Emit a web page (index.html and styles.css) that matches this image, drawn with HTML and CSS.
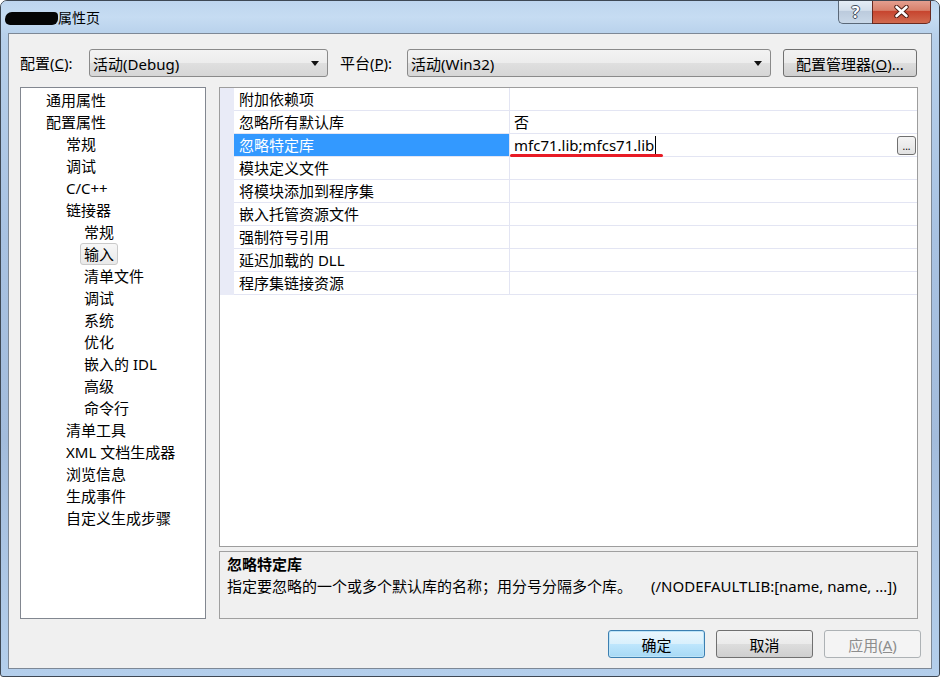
FILE: index.html
```html
<!DOCTYPE html>
<html lang="zh-CN">
<head>
    <meta charset="UTF-8">
    <title>属性页</title>
    <link rel="stylesheet" href="styles.css">
</head>
<body>
    <div class="window">
        <div class="titlebar">
            <div class="title"><span class="redact"></span>属性页</div>
            <div class="caption-buttons">
                <div class="cap-help">?</div>
                <div class="cap-close">
                    <svg width="15" height="13" viewBox="0 0 15 13">
                        <path d="M2.5 2 L12.5 11 M12.5 2 L2.5 11" stroke="#4b1d14" stroke-width="4.4" stroke-linecap="round"/>
                        <path d="M2.5 2 L12.5 11 M12.5 2 L2.5 11" stroke="#fff" stroke-width="2.6" stroke-linecap="round"/>
                    </svg>
                </div>
            </div>
        </div>

        <div class="client">
            <div class="toolbar">
                <label class="field-label label-config">配置(<u>C</u>):</label>
                <div class="combo combo-config"><span>活动(Debug)</span><i class="arrow"></i></div>
                <label class="field-label label-platform">平台(<u>P</u>):</label>
                <div class="combo combo-platform"><span>活动(Win32)</span><i class="arrow"></i></div>
                <button class="win-button config-manager">配置管理器(<u>O</u>)...</button>
            </div>

            <div class="main">
                <div class="tree">
                    <div class="tree-item level-0"><span>通用属性</span></div>
                    <div class="tree-item level-0"><span>配置属性</span></div>
                    <div class="tree-item level-1"><span>常规</span></div>
                    <div class="tree-item level-1"><span>调试</span></div>
                    <div class="tree-item level-1"><span>C/C++</span></div>
                    <div class="tree-item level-1"><span>链接器</span></div>
                    <div class="tree-item level-2"><span>常规</span></div>
                    <div class="tree-item level-2 selected"><span>输入</span></div>
                    <div class="tree-item level-2"><span>清单文件</span></div>
                    <div class="tree-item level-2"><span>调试</span></div>
                    <div class="tree-item level-2"><span>系统</span></div>
                    <div class="tree-item level-2"><span>优化</span></div>
                    <div class="tree-item level-2"><span>嵌入的 IDL</span></div>
                    <div class="tree-item level-2"><span>高级</span></div>
                    <div class="tree-item level-2"><span>命令行</span></div>
                    <div class="tree-item level-1"><span>清单工具</span></div>
                    <div class="tree-item level-1"><span>XML 文档生成器</span></div>
                    <div class="tree-item level-1"><span>浏览信息</span></div>
                    <div class="tree-item level-1"><span>生成事件</span></div>
                    <div class="tree-item level-1"><span>自定义生成步骤</span></div>
                </div>

                <div class="panel">
                    <div class="prop-grid">
                        <div class="prop-row">
                            <div class="prop-gutter"></div>
                            <div class="prop-name">附加依赖项</div>
                            <div class="prop-value"></div>
                        </div>
                        <div class="prop-row">
                            <div class="prop-gutter"></div>
                            <div class="prop-name">忽略所有默认库</div>
                            <div class="prop-value">否</div>
                        </div>
                        <div class="prop-row selected">
                            <div class="prop-gutter"></div>
                            <div class="prop-name">忽略特定库</div>
                            <div class="prop-value">
                                <span class="lib-value">mfc71.lib;mfcs71.lib<i class="caret"></i></span>
                                <button class="dots-button">...</button>
                            </div>
                        </div>
                        <div class="prop-row">
                            <div class="prop-gutter"></div>
                            <div class="prop-name">模块定义文件</div>
                            <div class="prop-value"></div>
                        </div>
                        <div class="prop-row">
                            <div class="prop-gutter"></div>
                            <div class="prop-name">将模块添加到程序集</div>
                            <div class="prop-value"></div>
                        </div>
                        <div class="prop-row">
                            <div class="prop-gutter"></div>
                            <div class="prop-name">嵌入托管资源文件</div>
                            <div class="prop-value"></div>
                        </div>
                        <div class="prop-row">
                            <div class="prop-gutter"></div>
                            <div class="prop-name">强制符号引用</div>
                            <div class="prop-value"></div>
                        </div>
                        <div class="prop-row">
                            <div class="prop-gutter"></div>
                            <div class="prop-name">延迟加载的 DLL</div>
                            <div class="prop-value"></div>
                        </div>
                        <div class="prop-row">
                            <div class="prop-gutter"></div>
                            <div class="prop-name">程序集链接资源</div>
                            <div class="prop-value"></div>
                        </div>
                    </div>

                    <div class="description">
                        <div class="desc-title">忽略特定库</div>
                        <div class="desc-text">指定要忽略的一个或多个默认库的名称；用分号分隔多个库。<span class="desc-switch">(/NODEFAULTLIB:[name, name, ...])</span></div>
                    </div>
                </div>
            </div>

            <div class="actions">
                <button class="win-button default">确定</button>
                <button class="win-button">取消</button>
                <button class="win-button" disabled>应用(<u>A</u>)</button>
            </div>
        </div>
    </div>
</body>
</html>
```

FILE: styles.css
```css
body {
    margin: 0;
    background-color: #fff;
    font-family: "Noto Sans", "Noto Sans CJK SC", sans-serif;
    font-size: 15px;
    color: #000;
}
.window {
    width: 940px;
    height: 677px;
    box-sizing: border-box;
    display: flex;
    flex-direction: column;
    padding: 0 7px 7px 7px;
    border: 1px solid #3e4854;
    border-radius: 7px 7px 3px 3px;
    background: linear-gradient(180deg, #c3d9f0 0%, #b6cfea 6%, #a8c2e2 35%, #a3bcdc 65%, #b4cfec 100%);
    overflow: hidden;
}

/* title bar */
.titlebar {
    height: 32px;
    margin: 0 -7px;
    padding: 0 8px 0 4px;
    display: flex;
    justify-content: space-between;
    background: linear-gradient(180deg, #bed5ee 0%, #c6dcf2 50%, #b9d2ec 100%);
}
.title {
    padding-top: 7px;
    line-height: 20px;
    font-size: 14px;
    display: flex;
    align-items: flex-start;
}
.redact {
    display: inline-block;
    width: 53px;
    height: 13px;
    margin-top: 4px;
    background-color: #050505;
    border-radius: 7px 4px 6px 5px;
}
.caption-buttons {
    display: flex;
    margin-top: -1px;
    height: 24px;
}
.cap-help, .cap-close {
    box-sizing: border-box;
    height: 24px;
    display: flex;
    align-items: center;
    justify-content: center;
    border: 1px solid #5a6878;
    border-top: none;
}
.cap-help {
    width: 34px;
    border-right: none;
    border-radius: 0 0 0 5px;
    background: linear-gradient(180deg, #e6eef7 0%, #d3dfec 45%, #bccbdd 50%, #c9d8e8 100%);
    color: #fff;
    font-weight: bold;
    font-size: 16px;
    text-shadow: 1px 0 #404d5c, -1px 0 #404d5c, 0 1px #404d5c, 0 -1px #404d5c;
}
.cap-close {
    width: 59px;
    border-color: #6a2a20;
    border-radius: 0 0 5px 0;
    background: linear-gradient(180deg, #e5a293 0%, #d8806b 45%, #c7452f 50%, #d16a4f 100%);
}

/* client area */
.client {
    flex: 1;
    display: flex;
    flex-direction: column;
    background-color: #f0f0f0;
    border: 1px solid #7d8896;
    padding: 15px 10px 0 11px;
}
.toolbar {
    display: flex;
    align-items: center;
    height: 28px;
    margin-right: 4px;
}
.field-label {
    line-height: 28px;
}
.label-config {
    width: 69px;
}
.label-platform {
    width: 67px;
    margin-left: 12px;
}
.combo {
    box-sizing: border-box;
    height: 28px;
    display: flex;
    align-items: center;
    justify-content: space-between;
    padding: 0 8px 0 3px;
    border: 1px solid #8a8a8a;
    border-radius: 3px;
    background: linear-gradient(180deg, #f3f3f3 0%, #ececec 50%, #dfdfdf 51%, #d6d6d6 100%);
}
.combo-config {
    width: 239px;
}
.combo-platform {
    width: 364px;
}
.arrow {
    width: 0;
    height: 0;
    border-left: 4px solid transparent;
    border-right: 4px solid transparent;
    border-top: 5px solid #111;
}
.win-button {
    box-sizing: border-box;
    height: 28px;
    padding: 0;
    font-family: inherit;
    font-size: 15px;
    color: #000;
    border: 1px solid #707070;
    border-radius: 3px;
    background: linear-gradient(180deg, #f2f2f2 0%, #ebebeb 50%, #dddddd 51%, #cfcfcf 100%);
}
.config-manager {
    width: 134px;
    margin-left: 12px;
}

/* main */
.main {
    display: flex;
    gap: 13px;
    height: 532px;
    margin-top: 10px;
    margin-right: 3px;
}
.tree {
    width: 186px;
    box-sizing: border-box;
    background-color: #fff;
    border: 1px solid #828790;
    padding-top: 1px;
}
.tree-item {
    height: 22px;
    line-height: 20px;
}
.tree-item span {
    display: inline-block;
    padding: 0 3px;
    border: 1px solid transparent;
    border-radius: 3px;
    white-space: nowrap;
}
.level-0 { padding-left: 21px; }
.level-1 { padding-left: 41px; }
.level-2 { padding-left: 59px; }
.tree-item.selected span {
    border-color: #cacaca;
    background: linear-gradient(180deg, #f7f7f7 0%, #e9e9e9 100%);
}

.panel {
    flex: 1;
    display: flex;
    flex-direction: column;
}
.prop-grid {
    flex: 1;
    background-color: #fff;
    border: 1px solid #9d9d9d;
}
.prop-row {
    display: flex;
    height: 23px;
}
.prop-gutter {
    width: 14px;
    background-color: #e9ebf7;
}
.prop-name, .prop-value {
    box-sizing: border-box;
    height: 23px;
    line-height: 22px;
    border-bottom: 1px solid #e3e5f3;
    white-space: nowrap;
}
.prop-name {
    width: 276px;
    padding-left: 5px;
    border-right: 1px solid #e3e5f3;
}
.prop-value {
    flex: 1;
    display: flex;
    align-items: center;
    padding: 0 1px 0 4px;
}
.prop-row.selected .prop-name {
    background-color: #3399ff;
    color: #fff;
}
.lib-value {
    position: relative;
    display: inline-flex;
    align-items: center;
}
.lib-value::after {
    content: "";
    position: absolute;
    left: -4px;
    right: -7px;
    bottom: -1px;
    height: 3px;
    border-radius: 2px;
    background-color: #e81b25;
}
.caret {
    display: inline-block;
    width: 1px;
    height: 18px;
    margin-left: 1px;
    background-color: #000;
}
.dots-button {
    margin-left: auto;
    width: 19px;
    height: 19px;
    padding: 0;
    font-size: 10px;
    line-height: 19px;
    font-family: inherit;
    border: 1px solid #707070;
    border-radius: 3px;
    background: linear-gradient(180deg, #f4f4f4 0%, #e2e2e2 100%);
}

.description {
    height: 68px;
    box-sizing: border-box;
    margin-top: 4px;
    padding: 1px 0 0 7px;
    border: 1px solid #a0a0a0;
    line-height: 22px;
}
.desc-title {
    font-weight: bold;
}
.desc-switch {
    margin-left: 19px;
}

/* bottom buttons */
.actions {
    display: flex;
    justify-content: flex-end;
    gap: 11px;
    margin-top: 11px;
}
.actions .win-button {
    width: 97px;
}
.win-button.default {
    border-color: #3c7fb1;
    background: linear-gradient(180deg, #eaf6fd 0%, #d9f0fc 50%, #bee6fd 51%, #a7d9f5 100%);
    box-shadow: inset 0 0 0 1px #bde4f8;
}
.win-button:disabled {
    color: #8d8d8d;
    border-color: #adb2b5;
    background: #f4f4f4;
}
```
